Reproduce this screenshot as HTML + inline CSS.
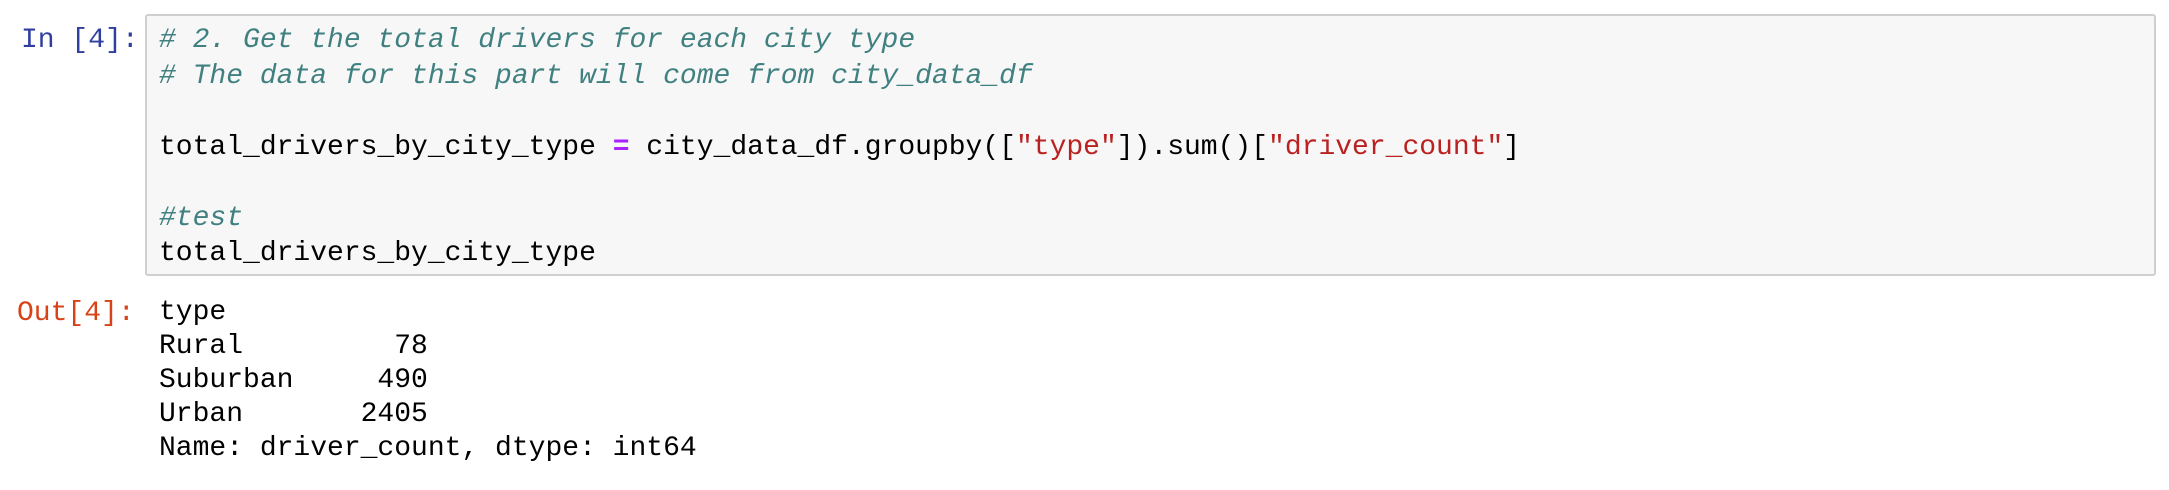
<!DOCTYPE html>
<html><head><meta charset="utf-8"><style>
html,body{margin:0;padding:0;background:#fff;width:2169px;height:490px;overflow:hidden}
.m{font-family:"Liberation Mono",monospace;font-size:28px;line-height:35.5px;white-space:pre;position:absolute;color:#000}
.box{position:absolute;left:145px;top:14px;width:2007px;height:258px;background:#f7f7f7;border:2px solid #cfcfcf;border-radius:3px}
.c{color:#408080;font-style:italic}
.s{color:#BA2121}
.o{color:#AA22FF;font-weight:bold}
</style></head><body>
<div class="box"></div>
<div class="m" style="left:21px;top:23px;color:#303F9F">In [4]:</div>
<div class="m" style="left:159px;top:23px"><span class="c"># 2. Get the total drivers for each city type</span>
<span class="c"># The data for this part will come from city_data_df</span>

total_drivers_by_city_type <span class="o">=</span> city_data_df.groupby([<span class="s">"type"</span>]).sum()[<span class="s">"driver_count"</span>]

<span class="c">#test</span>
total_drivers_by_city_type</div>
<div class="m" style="left:17px;top:296px;color:#D84315">Out[4]:</div>
<div class="m" style="left:159px;top:296px;line-height:34px">type
Rural         78
Suburban     490
Urban       2405
Name: driver_count, dtype: int64</div>
</body></html>
